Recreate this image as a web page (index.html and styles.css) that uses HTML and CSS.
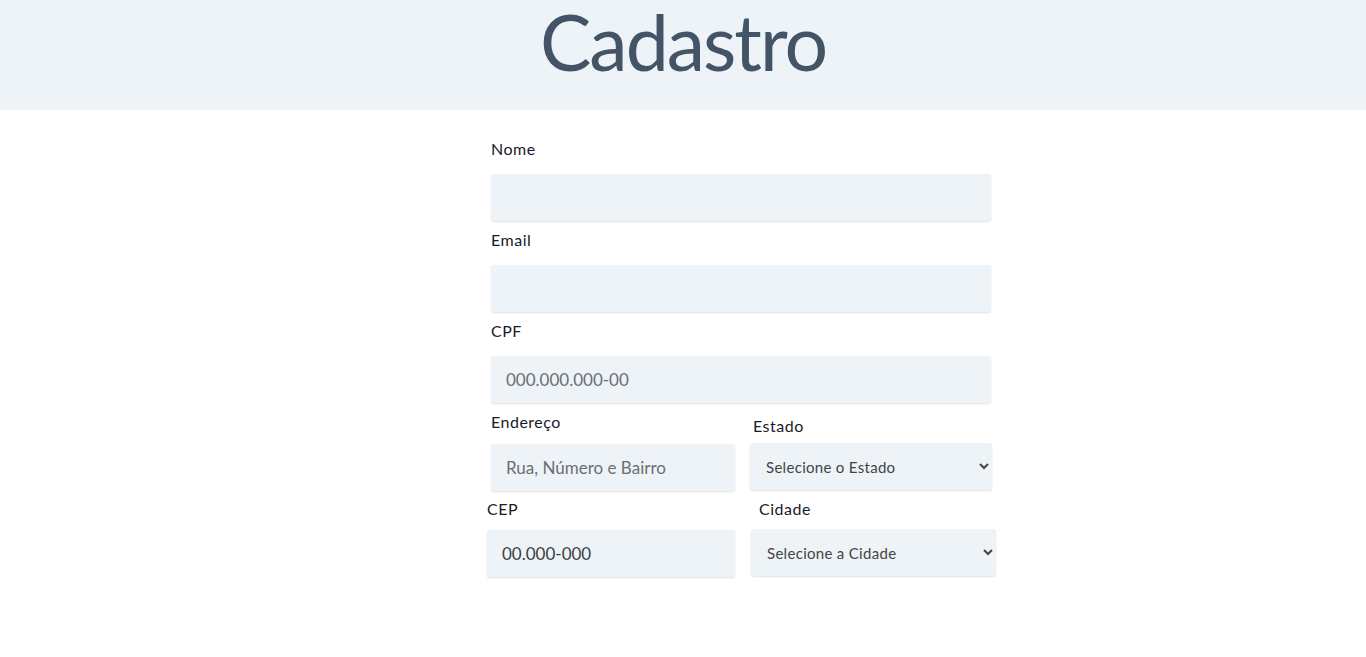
FILE: index.html
```html
<!DOCTYPE html>
<html lang="pt-BR">
<head>
<meta charset="utf-8">
<title>Cadastro</title>
<link rel="stylesheet" href="styles.css">
</head>
<body>
<header class="top">
  <h1 class="title">Cadastro</h1>
</header>
<main class="main">
  <form class="form">
    <div class="field">
      <label class="label">Nome</label>
      <input class="input" type="text">
    </div>
    <div class="field">
      <label class="label">Email</label>
      <input class="input" type="email">
    </div>
    <div class="field">
      <label class="label">CPF</label>
      <input class="input" type="text" placeholder="000.000.000-00">
    </div>
    <div class="row row-a">
      <div class="col col-end">
        <label class="label">Endereço</label>
        <input class="input" type="text" placeholder="Rua, Número e Bairro">
      </div>
      <div class="col col-est">
        <label class="label">Estado</label>
        <select class="select"><option>Selecione o Estado</option></select>
      </div>
    </div>
    <div class="row row-b">
      <div class="col col-cep">
        <label class="label">CEP</label>
        <input class="input dark" type="text" placeholder="00.000-000">
      </div>
      <div class="col col-cid">
        <label class="label">Cidade</label>
        <select class="select"><option>Selecione a Cidade</option></select>
      </div>
    </div>
  </form>
</main>
</body>
</html>
```
FILE: styles.css
```css
* { box-sizing: border-box; }
body {
  margin: 0;
  font-family: "Lato", "Noto Sans", sans-serif;
  background: #ffffff;
  color: #1b1a2a;
}
.top {
  height: 110px;
  background: #eef3f7;
  display: flex;
  justify-content: center;
}
.title {
  margin: 0;
  padding-top: 2px;
  font-size: 77px;
  font-weight: 400;
  line-height: 78px;
  color: #435466;
  letter-spacing: -2px;
}
.main {
  display: flex;
  justify-content: center;
}
.form {
  width: 510px;
  margin-left: 116px;
  padding-top: 29px;
  padding-left: 5px;
}
.field {
  width: 500px;
  display: flex;
  flex-direction: column;
}
.label {
  display: block;
  font-size: 16px;
  line-height: 20px;
  letter-spacing: 0.5px;
  color: #1b1a2a;
  margin-bottom: 15px;
}
.input, .select {
  height: 47px;
  border: none;
  border-radius: 3px;
  background: #eef3f7;
  box-shadow: 0 1px 2px rgba(0, 0, 0, 0.12);
  font-family: "Lato", "Noto Sans", sans-serif;
  font-size: 17px;
  padding: 0 15px;
  margin-bottom: 9px;
  color: #333;
  outline: none;
}
.input::placeholder { color: #6a6f76; }
.input.dark::placeholder { color: #3b3f45; }
.select {
  font-size: 15px;
  color: #444;
  padding: 0 12px;
  letter-spacing: 0.3px;
}
.row {
  display: flex;
  width: 510px;
}
.col { display: flex; flex-direction: column; }
.col-end { width: 244px; }
.col-end .label { margin-bottom: 12px; }
.col-est { width: 242px; margin-left: 15px; padding-top: 4px; }
.col-est .label { margin-bottom: 7px; margin-left: 3px; }
.row-b { margin-left: -4px; margin-top: -1px; }
.col-cep { width: 248px; }
.col-cep .label { margin-bottom: 11px; }
.col-cid { width: 245px; margin-left: 16px; }
.col-cid .label { margin-bottom: 10px; margin-left: 8px; }
```
